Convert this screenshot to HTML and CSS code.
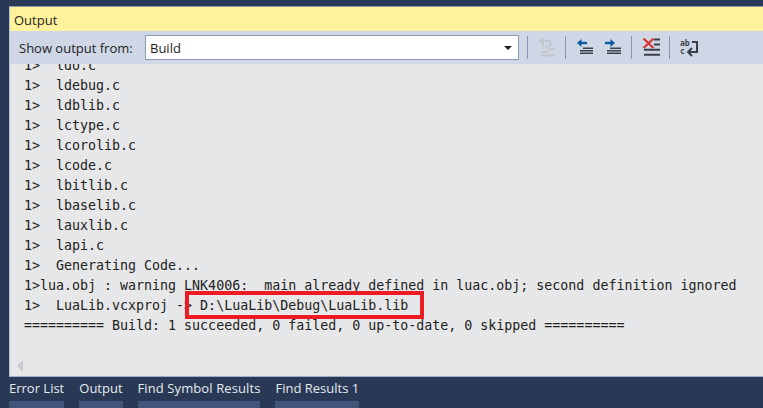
FILE: index.html
```html
<!DOCTYPE html>
<html lang="en">
<head>
<meta charset="utf-8">
<title>Output</title>
<link rel="stylesheet" href="styles.css">
</head>
<body>
<main class="panel">
  <header class="title">Output</header>
  <div class="toolbar">
    <span class="label">Show output from:</span>
    <div class="select"><span>Build</span><i class="caret"></i></div>
    <i class="sep"></i>
    <svg class="icon" width="25" height="26" viewBox="0 0 25 26"><path d="M9 12V5.500h4.500a3 3 0 0 1 0 6H11" fill="none" stroke="#c3c7cc" stroke-width="2"/><path d="M8.500 2 5 5.500 8.500 9z" fill="#c3c7cc"/><path d="M14 14h7M7 17h7M7 20.500h14" fill="none" stroke="#c3c7cc" stroke-width="1.800"/></svg>
    <i class="sep"></i>
    <svg class="icon gap-r" width="25" height="26" viewBox="0 0 25 26"><path d="M9 8h6" stroke="#0e5a9e" stroke-width="2.400"/><path d="M9.500 4 5 8l4.500 4z" fill="#0e5a9e"/><path d="M11 13.300h10M8 15.800h13M8 18.300h13" stroke="#3c4148" stroke-width="1.600"/></svg>
    <svg class="icon" width="25" height="26" viewBox="0 0 25 26"><path d="M5 8h6" stroke="#0e5a9e" stroke-width="2.400"/><path d="M10.500 4 15 8l-4.500 4z" fill="#0e5a9e"/><path d="M10 13.300h11M7 15.800h14M7 18.300h14" stroke="#3c4148" stroke-width="1.600"/></svg>
    <i class="sep"></i>
    <svg class="icon" width="25" height="26" viewBox="0 0 25 26"><path d="M5.500 3.500l10 9.500M15.500 3.500l-10 9.500" stroke="#d8342c" stroke-width="2.200"/><path d="M16 4.500h6M16 9.500h6M6 14.800h16M6 19.800h16" stroke="#3c4148" stroke-width="1.900"/></svg>
    <i class="sep"></i>
    <svg class="icon" width="25" height="26" viewBox="0 0 25 26"><text x="4" y="11" class="abc">ab</text><text x="4" y="18.500" class="abc">c</text><path d="M16 7h5v10H13" fill="none" stroke="#3c4148" stroke-width="2"/><path d="M16 13 12 17l4 4" fill="none" stroke="#3c4148" stroke-width="2"/></svg>
  </div>
  <div class="log">
    <pre class="lines">1&gt;  ldo.c
1&gt;  ldebug.c
1&gt;  ldblib.c
1&gt;  lctype.c
1&gt;  lcorolib.c
1&gt;  lcode.c
1&gt;  lbitlib.c
1&gt;  lbaselib.c
1&gt;  lauxlib.c
1&gt;  lapi.c
1&gt;  Generating Code...
1&gt;lua.obj : warning LNK4006:  main already defined in luac.obj; second definition ignored
1&gt;  LuaLib.vcxproj -&gt; D:\LuaLib\Debug\LuaLib.lib
========== Build: 1 succeeded, 0 failed, 0 up-to-date, 0 skipped ==========</pre>
    <div class="callout"></div>
    <i class="scroll-left"></i>
  </div>
</main>
<nav class="tabs">
  <div class="tab"><span>Error List</span><i class="tab-bar"></i></div>
  <div class="tab"><span>Output</span><i class="tab-bar"></i></div>
  <div class="tab tab-spaced"><span>Find Symbol Results</span><i class="tab-bar"></i></div>
  <div class="tab"><span>Find Results 1</span><i class="tab-bar"></i></div>
</nav>
</body>
</html>
```
FILE: styles.css
```css
html, body {
  margin: 0;
  height: 100%;
}
body {
  width: 763px;
  height: 408px;
  overflow: hidden;
  background: #293955;
  display: flex;
  flex-direction: column;
  padding-top: 6px;
  box-sizing: border-box;
  font-family: "Open Sans", "Noto Sans", sans-serif;
}
.panel {
  margin-left: 9px;
  height: 371px;
  flex: none;
  display: flex;
  flex-direction: column;
  border-top: 1px solid #8d97a8;
  border-left: 1px solid #b4bfd2;
  border-bottom: 1px solid #a3afc6;
  box-sizing: border-box;
}
.title {
  height: 24px;
  flex: none;
  background: #fff29d;
  color: #1f1f1f;
  font-size: 13px;
  line-height: 26px;
  padding-left: 4px;
}
.toolbar {
  height: 33px;
  flex: none;
  background: #cfd6e5;
  display: flex;
  align-items: center;
  padding-left: 9px;
  color: #1e1e1e;
}
.label {
  font-size: 13px;
  line-height: 30px;
  width: 126px;
  flex: none;
}
.select {
  width: 374px;
  height: 25px;
  box-sizing: border-box;
  flex: none;
  background: #fff;
  border: 1px solid #8f9bb3;
  display: flex;
  align-items: center;
  justify-content: space-between;
  padding: 0 6px 0 4px;
  font-size: 13px;
}
.caret {
  border-left: 4px solid transparent;
  border-right: 4px solid transparent;
  border-top: 4px solid #1e1e1e;
}
.sep {
  width: 1px;
  height: 23px;
  background: #8b95a8;
  flex: none;
  margin: 0 6px;
}
.select + .sep { margin-left: 8px; }
.icon { flex: none; }
.gap-r { margin-right: 3px; }
.abc {
  font: bold 8px "DejaVu Sans Mono", monospace;
  fill: #3c4148;
}
.log {
  flex: 1;
  position: relative;
  overflow: hidden;
  background: #e6e7e8;
}
.lines {
  margin: -8px 0 0 14px;
  font: 13.3px/20px "DejaVu Sans Mono", monospace;
  color: #222;
}
.callout {
  position: absolute;
  left: 175px;
  top: 227px;
  width: 239px;
  height: 28px;
  box-sizing: border-box;
  border: 4px solid #ed1c24;
}
.scroll-left {
  position: absolute;
  left: 7px;
  top: 296px;
  border-top: 6px solid transparent;
  border-bottom: 6px solid transparent;
  border-right: 6px solid #c6c9cf;
}
.tabs {
  flex: 1;
  display: flex;
  gap: 15px;
  padding-left: 9px;
}
.tab {
  display: flex;
  flex-direction: column;
  justify-content: space-between;
  color: #e6e9ef;
  font-size: 13px;
  line-height: 22px;
  white-space: nowrap;
}
.tab-spaced { letter-spacing: 0.1px; }
.tab-bar {
  height: 7px;
  background: #405579;
}
```
